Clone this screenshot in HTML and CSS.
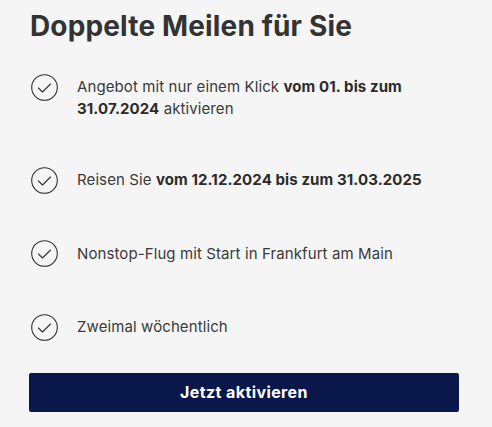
FILE: index.html
```html
<!DOCTYPE html>
<html lang="de">
<head>
<meta charset="utf-8">
<link rel="stylesheet" href="styles.css">
</head>
<body>
<main class="card">
  <h1 class="title">Doppelte Meilen für Sie</h1>
  <ul class="list">
    <li class="item">
      <svg class="check" viewBox="0 0 27 27" width="27" height="27"><circle cx="13.5" cy="13.5" r="12.8" fill="none" stroke="#333" stroke-width="1.1"/><path d="M7.5 14 L11.5 18 L19.5 10" fill="none" stroke="#333" stroke-width="1.1" stroke-linecap="round" stroke-linejoin="round"/></svg>
      <p class="text">Angebot mit nur einem Klick <b>vom 01. bis zum<br>31.07.2024</b> aktivieren</p>
    </li>
    <li class="item">
      <svg class="check" viewBox="0 0 27 27" width="27" height="27"><circle cx="13.5" cy="13.5" r="12.8" fill="none" stroke="#333" stroke-width="1.1"/><path d="M7.5 14 L11.5 18 L19.5 10" fill="none" stroke="#333" stroke-width="1.1" stroke-linecap="round" stroke-linejoin="round"/></svg>
      <p class="text">Reisen Sie <b>vom 12.12.2024 bis zum 31.03.2025</b></p>
    </li>
    <li class="item">
      <svg class="check" viewBox="0 0 27 27" width="27" height="27"><circle cx="13.5" cy="13.5" r="12.8" fill="none" stroke="#333" stroke-width="1.1"/><path d="M7.5 14 L11.5 18 L19.5 10" fill="none" stroke="#333" stroke-width="1.1" stroke-linecap="round" stroke-linejoin="round"/></svg>
      <p class="text">Nonstop-Flug mit Start in Frankfurt am Main</p>
    </li>
    <li class="item">
      <svg class="check" viewBox="0 0 27 27" width="27" height="27"><circle cx="13.5" cy="13.5" r="12.8" fill="none" stroke="#333" stroke-width="1.1"/><path d="M7.5 14 L11.5 18 L19.5 10" fill="none" stroke="#333" stroke-width="1.1" stroke-linecap="round" stroke-linejoin="round"/></svg>
      <p class="text">Zweimal wöchentlich</p>
    </li>
  </ul>
  <button class="cta" type="button">Jetzt aktivieren</button>
</main>
</body>
</html>
```

FILE: styles.css
```css
html, body {
  margin: 0;
  padding: 0;
  background: #f5f5f5;
}
body {
  font-family: Inter, "Liberation Sans", sans-serif;
  color: #333;
}
.card {
  padding: 9px 33px 0 29px;
  display: flex;
  flex-direction: column;
}
.title {
  margin: 0;
  font-size: 28px;
  line-height: 34px;
  font-weight: 700;
  letter-spacing: 0.15px;
  color: #333;
  padding-left: 1px;
}
.list {
  list-style: none;
  margin: 33px 0 0;
  padding: 0;
  display: flex;
  flex-direction: column;
  gap: 49px;
}
.item {
  display: flex;
  align-items: flex-start;
  gap: 19px;
  padding-left: 2px;
}
.check {
  flex: none;
  margin-top: -2.5px;
}
.text {
  flex: 1;
  margin: 0;
  font-size: 15px;
  line-height: 22px;
  letter-spacing: 0.1px;
  color: #3a3a3a;
}
.text b {
  font-weight: 700;
  color: #2b2b2b;
}
.cta {
  margin-top: 32px;
  width: 430px;
  height: 39px;
  border: 0;
  border-radius: 2px;
  background: #0a174b;
  color: #fff;
  font-family: Inter, "Liberation Sans", sans-serif;
  font-size: 16px;
  font-weight: 700;
  letter-spacing: 0.4px;
  cursor: pointer;
}
```
